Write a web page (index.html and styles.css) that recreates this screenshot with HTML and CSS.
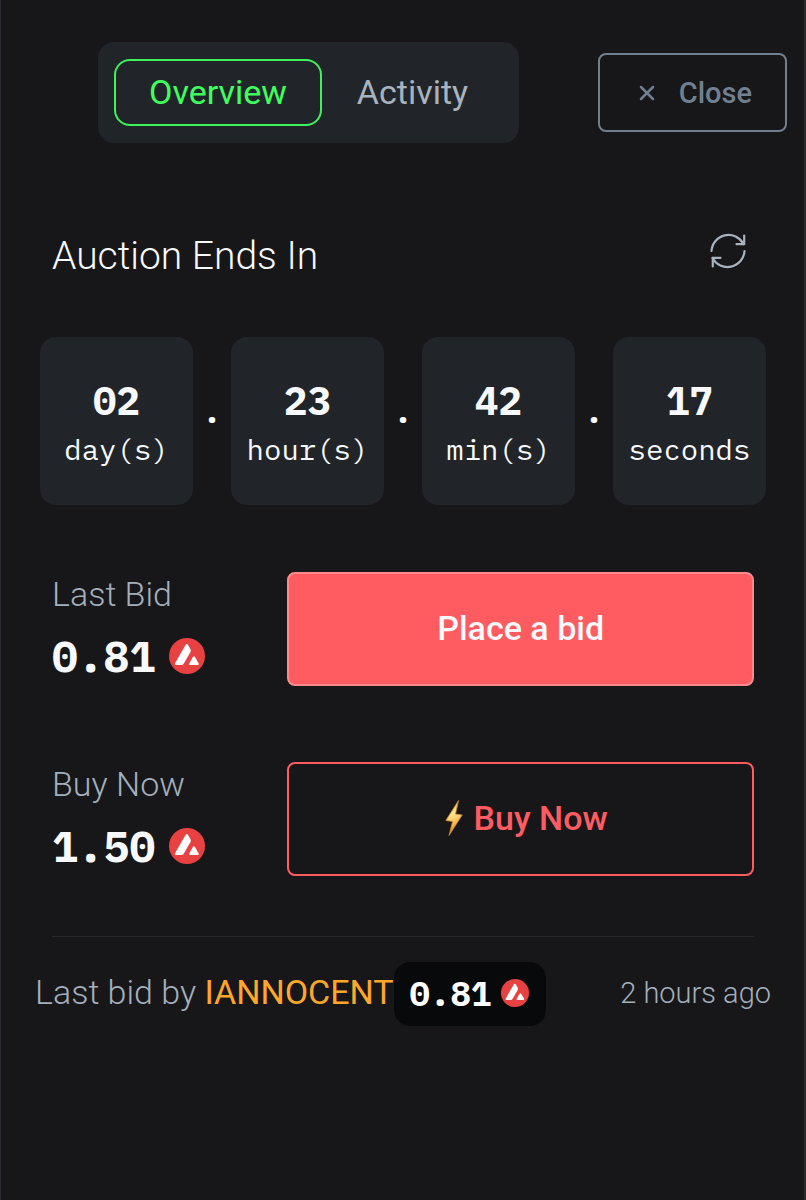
FILE: index.html
```
<!DOCTYPE html>
<html lang="en">
<head>
<meta charset="utf-8">
<meta name="viewport" content="width=device-width, initial-scale=1">
<title>Auction</title>
<link rel="stylesheet" href="styles.css">
</head>
<body>
<svg class="defs" aria-hidden="true">
  <symbol id="avax" viewBox="0 0 36 36">
    <circle cx="18" cy="18" r="18" fill="#e84142"/>
    <path d="M16.4 7.2Q17.8 4.800 19.200 7.200L21.500 11.300Q22.200 12.700 21.500 14L14.700 25.700Q14 27 12.500 27H7.600Q5 27 6.300 24.700ZM23.700 19.300Q24.900 17.300 26.100 19.300L29.400 24.900Q30.600 27 28.200 27H21.700Q19.300 27 20.500 24.900Z" fill="#fff"/>
  </symbol>
</svg>
<main class="panel">
  <header class="top">
    <nav class="tabs" aria-label="Sections">
      <button class="tab tab-active" type="button">Overview</button>
      <button class="tab" type="button">Activity</button>
    </nav>
    <button class="close" type="button">
      <svg class="close-icon" viewBox="0 0 16 16" aria-hidden="true"><path d="M2 2L14 14M14 2L2 14" fill="none" stroke="currentColor" stroke-width="2.500" stroke-linecap="round"/></svg>
      Close
    </button>
  </header>

  <section class="heading">
    <h1 class="title">Auction Ends In</h1>
    <button class="refresh" type="button" aria-label="Refresh">
      <svg class="refresh-icon" viewBox="0 0 36 36" fill="none" stroke="currentColor" stroke-width="2.200" stroke-linecap="round" stroke-linejoin="round" aria-hidden="true">
        <path d="M1.500 18A17 17 0 0 1 33.500 11"/><path d="M34.200 2.500V11.200H26.500"/>
        <path d="M34.500 18A17 17 0 0 1 2.500 25"/><path d="M2.800 33.500V24.800H10.500"/>
      </svg>
    </button>
  </section>

  <section class="countdown" aria-label="Time left">
    <div class="tile"><span class="number">02</span><span class="unit">day(s)</span></div>
    <span class="dot">.</span>
    <div class="tile"><span class="number">23</span><span class="unit">hour(s)</span></div>
    <span class="dot">.</span>
    <div class="tile"><span class="number">42</span><span class="unit">min(s)</span></div>
    <span class="dot">.</span>
    <div class="tile"><span class="number">17</span><span class="unit">seconds</span></div>
  </section>

  <section class="offers">
    <div class="offer">
      <div class="price">
        <span class="label">Last Bid</span>
        <span class="amount">0.81 <svg class="coin" role="img" aria-label="AVAX"><use href="#avax"/></svg></span>
      </div>
      <button class="action action-bid" type="button">Place a bid</button>
    </div>
    <div class="offer">
      <div class="price">
        <span class="label">Buy Now</span>
        <span class="amount">1.50 <svg class="coin" role="img" aria-label="AVAX"><use href="#avax"/></svg></span>
      </div>
      <button class="action action-buy" type="button">
        <svg class="bolt" viewBox="0 0 18 36" aria-hidden="true">
          <defs><linearGradient id="gold" x1="0" y1="0" x2="0.200" y2="1"><stop offset="0" stop-color="#f5b642"/><stop offset="0.450" stop-color="#ffe58a"/><stop offset="1" stop-color="#ee8b18"/></linearGradient></defs>
          <path d="M13.500 0.500L0.800 20.500L7.500 21.500L4 35.500L17.200 15L10.500 14Z" fill="url(#gold)" stroke="#c9852c" stroke-width="0.800" stroke-linejoin="round"/>
        </svg>
        Buy Now
      </button>
    </div>
  </section>

  <footer class="last">
    <span class="bidder">Last bid by <a class="name" href="#">IANNOCENT</a></span>
    <span class="pill">0.81 <svg class="coin coin-small" role="img" aria-label="AVAX"><use href="#avax"/></svg></span>
    <time class="ago">2 hours ago</time>
  </footer>
</main>
</body>
</html>
```
FILE: styles.css
```
* { box-sizing: border-box; }

body {
  margin: 0;
  background: #17171a;
  color: #f8f9fa;
  font-family: Roboto, "Liberation Sans", sans-serif;
}

button {
  margin: 0;
  padding: 0;
  border: 0;
  background: none;
  font: inherit;
  color: inherit;
  cursor: pointer;
}

.defs { display: none; }

.panel {
  min-height: 100vh;
  padding-top: 42px;
  border: solid #2b2c31;
  border-width: 0 2px 0 1px;
}

.top {
  display: flex;
  align-items: center;
  justify-content: space-between;
  padding: 0 17px 0 97px;
}

.tabs {
  display: flex;
  padding: 17px 16px;
  border-radius: 16px;
  background: #212529;
}

.tab {
  height: 67px;
  padding: 0 33px 2px;
  border: 2px solid transparent;
  border-radius: 16px;
  font-size: 34px;
  color: #a8b3be;
}

.tab-active {
  border-color: #3ef25c;
  color: #3eff5e;
}

.close {
  display: flex;
  align-items: center;
  gap: 24px;
  height: 79px;
  padding: 0 33px 0 39px;
  border: 2px solid #708090;
  border-radius: 8px;
  font-size: 29px;
  font-weight: 500;
  color: #708090;
}

.close-icon { width: 16px; height: 16px; }

.heading {
  display: flex;
  align-items: center;
  justify-content: space-between;
  padding: 83px 58px 0 51px;
}

.title {
  margin: 0;
  font-size: 39px;
  line-height: 60px;
  font-weight: 300;
}

.refresh { color: #a8b3be; }

.refresh-icon {
  display: block;
  width: 36px;
  height: 36px;
  margin-bottom: 10px;
}

.countdown {
  display: grid;
  grid-template-columns: 1fr 38px 1fr 38px 1fr 38px 1fr;
  padding: 51px 38px 0 39px;
  font-family: "IBM Plex Mono", "Liberation Mono", monospace;
  text-align: center;
}

.tile {
  display: flex;
  flex-direction: column;
  gap: 4px;
  padding: 38px 0;
  border-radius: 16px;
  background: #212529;
}

.number {
  font-size: 39px;
  line-height: 52px;
  font-weight: 700;
}

.unit {
  font-size: 29px;
  line-height: 36px;
}

.dot {
  align-self: center;
  padding-bottom: 18px;
  font-size: 30px;
  line-height: 36px;
  font-weight: 700;
}

.offers {
  display: grid;
  gap: 76px;
  margin: 67px 50px 0 51px;
  padding-bottom: 60px;
  border-bottom: 1px solid #27282b;
}

.offer {
  display: grid;
  grid-template-columns: 1fr 2fr;
  column-gap: 2px;
}

.price {
  display: flex;
  flex-direction: column;
  gap: 10px;
}

.label {
  font-size: 34px;
  line-height: 44px;
  font-weight: 300;
  color: #a3b0bc;
}

.amount {
  display: flex;
  align-items: center;
  gap: 14px;
  font-family: "IBM Plex Mono", "Liberation Mono", monospace;
  font-size: 43px;
  line-height: 60px;
  font-weight: 700;
}

.coin {
  width: 36px;
  height: 36px;
}

.action {
  display: flex;
  align-items: center;
  justify-content: center;
  gap: 10px;
  height: 114px;
  padding-bottom: 2px;
  border: 2px solid #ff5c62;
  border-radius: 8px;
  font-size: 34px;
  font-weight: 500;
}

.action-bid {
  border-color: #ff8a8e;
  background: #ff5c62;
}

.action-buy {
  padding-left: 10px;
  color: #ff5c62;
}

.bolt { width: 20px; height: 36px; }

.last {
  display: flex;
  align-items: center;
  padding: 25px 33px 0 34px;
  font-size: 34px;
  font-weight: 300;
  color: #a3b0bc;
}

.bidder { padding-bottom: 4px; }

.name {
  font-weight: 400;
  color: #ffa726;
  text-decoration: none;
}

.pill {
  display: flex;
  align-items: center;
  gap: 10px;
  height: 64px;
  padding: 0 17px 2px 16px;
  border-radius: 16px;
  background: #08090b;
  font-family: "IBM Plex Mono", "Liberation Mono", monospace;
  font-weight: 700;
  color: #fff;
}

.coin-small { width: 28px; height: 28px; }

.ago {
  margin-left: auto;
  padding-bottom: 2px;
  font-size: 29px;
}
```
